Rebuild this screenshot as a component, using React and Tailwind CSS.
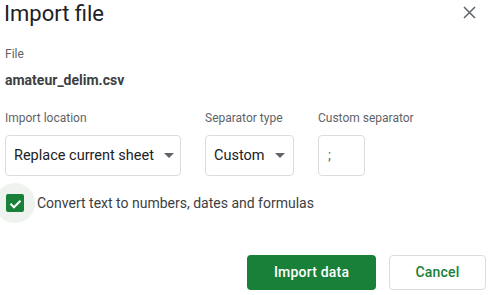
import React from "react";

function Caret() {
  return (
    <svg width="10" height="5" viewBox="0 0 10 5" className="shrink-0">
      <path d="M0 0 L10 0 L5 5 Z" fill="#5f6368" />
    </svg>
  );
}

function Field({ label, width, children }) {
  return (
    <div className="flex flex-col">
      <div className="text-[12px] leading-[16px] text-[#5f6368] whitespace-nowrap">
        {label}
      </div>
      <div
        className={`mt-[9px] h-[41px] ${width} rounded-[4px] border border-[#dadce0] flex items-center whitespace-nowrap`}
      >
        {children}
      </div>
    </div>
  );
}

export default function App() {
  return (
    <div
      className="w-[488px] h-[295px] bg-white pl-[5px] overflow-hidden"
      style={{ fontFamily: "Roboto, Arial, sans-serif" }}
    >
      <div className="flex justify-between h-[28px]">
        <div className="-ml-[1px] text-[22px] leading-[28px] text-[#202124]">
          Import file
        </div>
        <svg
          width="13"
          height="13"
          viewBox="0 0 13 13"
          className="mt-[6px] mr-[12px]"
        >
          <path
            d="M1 1 L12 12 M12 1 L1 12"
            stroke="#5f6368"
            strokeWidth="1.5"
          />
        </svg>
      </div>

      <div className="mt-[18px] text-[12px] leading-[16px] text-[#5f6368]">
        File
      </div>
      <div className="mt-[8px] text-[14px] leading-[20px] font-bold text-[#3c4043]">
        amateur_delim.csv
      </div>

      <div className="mt-[20px] flex gap-[24px]">
        <Field label="Import location" width="w-[176px]">
          <span className="pl-[8px] text-[14.5px] text-[#202124]">
            Replace current sheet
          </span>
          <span className="ml-[10px]">
            <Caret />
          </span>
        </Field>
        <Field label="Separator type" width="w-[89px]">
          <span className="pl-[8px] text-[14.5px] text-[#202124]">Custom</span>
          <span className="ml-[10px]">
            <Caret />
          </span>
        </Field>
        <Field label="Custom separator" width="w-[47px]">
          <span className="pl-[9px] text-[14px] text-[#5f6368]">;</span>
        </Field>
      </div>

      <div className="mt-[7px] h-[40px] flex items-center">
        <div className="relative w-[18px] h-[18px] ml-[1px]">
          <div className="absolute -left-[11px] -top-[11px] w-[40px] h-[40px] rounded-full bg-[#eef3ef]" />
          <div className="relative w-[18px] h-[18px] rounded-[2px] bg-[#188038] flex items-center justify-center">
            <svg width="15" height="15" viewBox="0 0 24 24">
              <path
                d="M4 12.5 L9.5 18 L20 7.5"
                stroke="white"
                strokeWidth="3.2"
                fill="none"
              />
            </svg>
          </div>
        </div>
        <span className="ml-[13px] text-[14px] text-[#3c4043]">
          Convert text to numbers, dates and formulas
        </span>
      </div>

      <div className="mt-[32px] flex justify-end gap-[13px] pr-[2px]">
        <button className="w-[129px] h-[35px] rounded-[4px] bg-[#188038] text-white text-[14px] font-medium tracking-[0.2px]">
          Import data
        </button>
        <button className="w-[97px] h-[35px] rounded-[4px] border border-[#dadce0] bg-white text-[#188038] text-[14px] font-medium tracking-[0.2px]">
          Cancel
        </button>
      </div>
    </div>
  );
}
